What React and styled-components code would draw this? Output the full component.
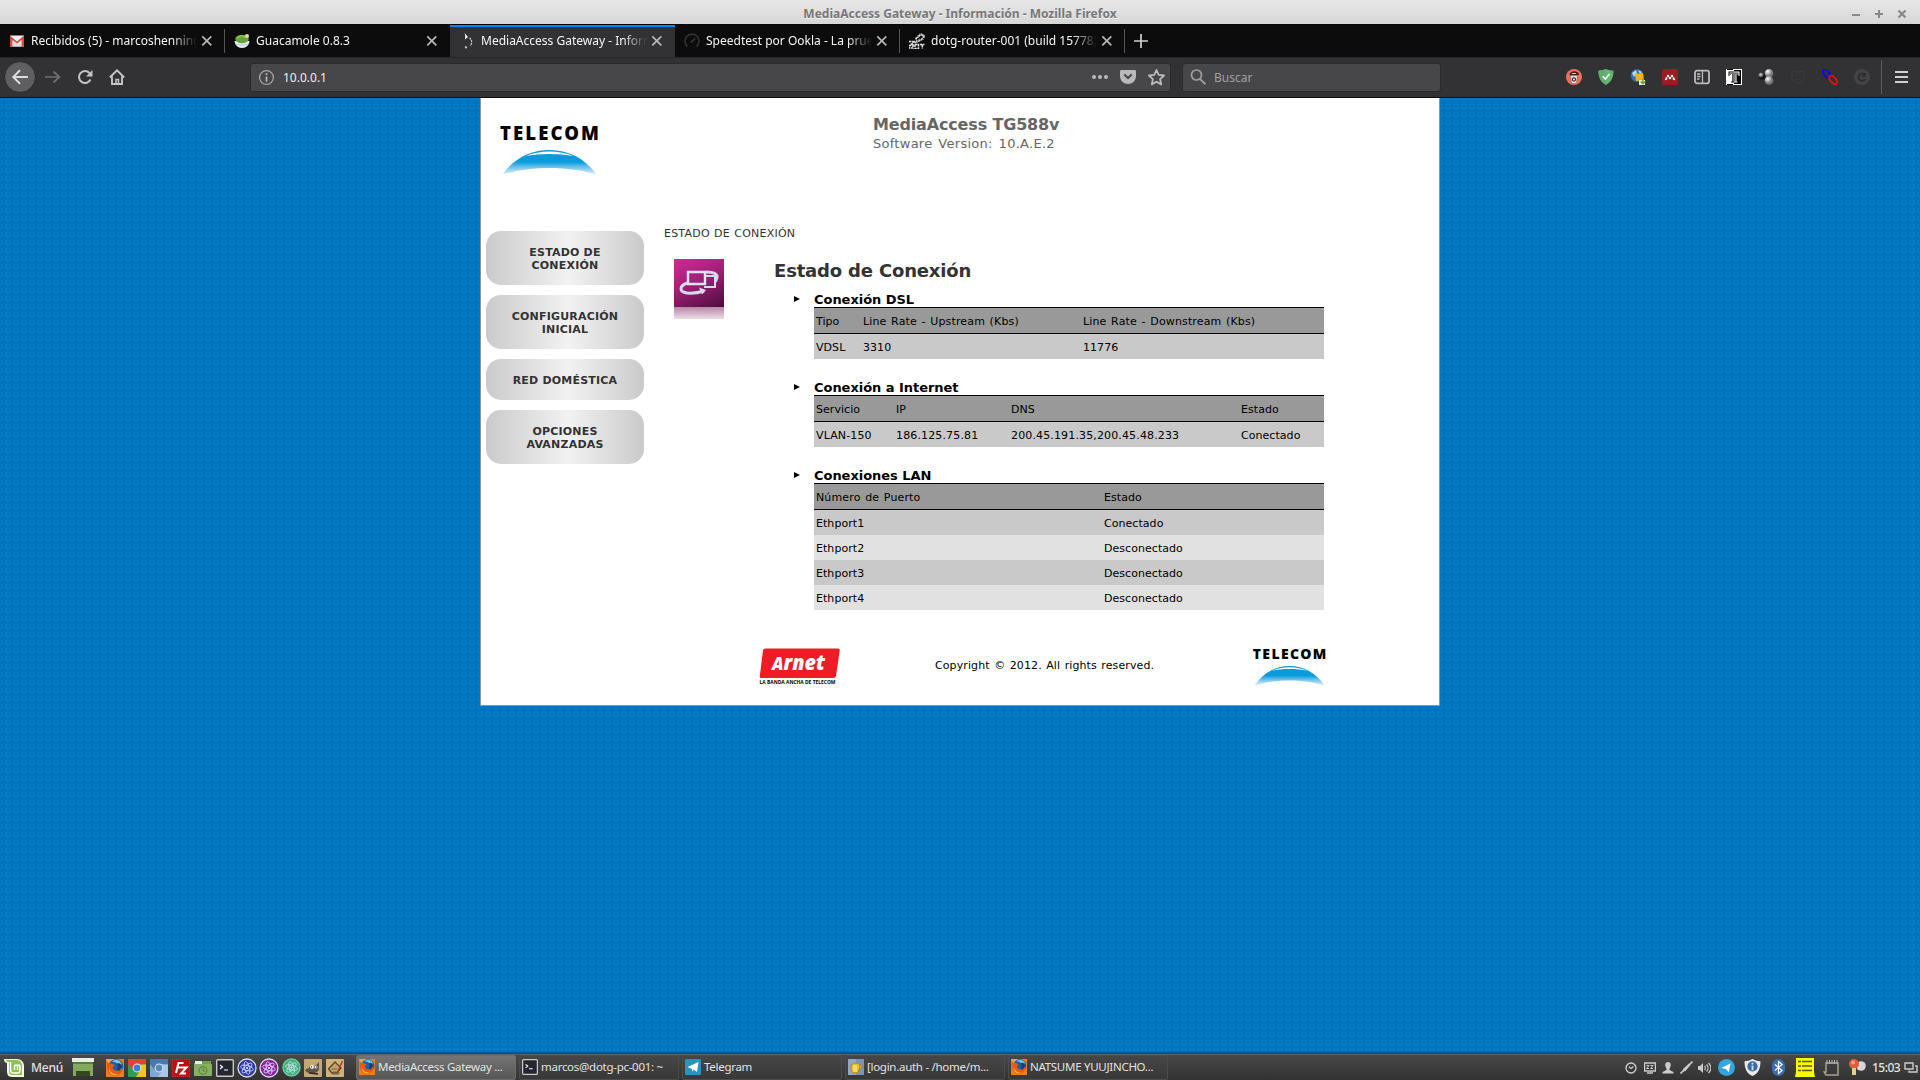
import React from "react";
import styled, { createGlobalStyle } from "styled-components";

const Global = createGlobalStyle`
  * { box-sizing: border-box; }
  body { margin: 0; background: #0073bd; overflow: hidden; }
  svg { display: block; flex: none; }
`;
const UI = `"Noto Sans", sans-serif`;
const WEB = `Verdana, "DejaVu Sans", sans-serif`;

const Screen = styled.div`
  width: 1920px; height: 1080px; display: flex; flex-direction: column;
  font-family: ${UI}; overflow: hidden;
`;
const TitleBar = styled.header`
  height: 24px; flex: none; display: grid; grid-template-columns: 1fr auto 1fr; align-items: center;
  background: linear-gradient(#e8e8e8, #d6d6d6); padding: 3px 11px 0 11px;
`;
const WindowTitle = styled.div`
  grid-column: 2; font-size: 12px; line-height: 20px; font-weight: 700; color: #777;
  text-shadow: 0 1px 0 #f4f4f4;
`;
const WindowButtons = styled.div`
  justify-self: end; display: flex; gap: 9px;
`;
const TabStrip = styled.div`
  height: 33px; flex: none; display: flex; background: #0c0c0d; border-top: 1px solid #050505;
`;
const Tab = styled.div`
  width: 225px; height: 32px; display: flex; align-items: center; padding: 0 10px 2px 9px; font-size: 12px;
  color: #f4f4f5; background: ${(p) => (p.$active ? "#323234" : "transparent")};
  border-top: 2px solid ${(p) => (p.$active ? "#0a84ff" : "transparent")};
  background-image: ${(p) => (p.$divider ? "linear-gradient(#555,#555)" : "none")};
  background-size: 1px 24px; background-position: right 2px; background-repeat: no-repeat;
`;
const TabLabel = styled.div`
  flex: 1; margin: 0 0 0 6px; white-space: nowrap; overflow: hidden; line-height: 20px;
  mask-image: linear-gradient(to right, #000 calc(100% - 26px), transparent calc(100% - 2px));
`;
const NewTab = styled.div`
  width: 32px; display: flex; align-items: center; justify-content: center; padding-bottom: 1px;
`;
const Toolbar = styled.div`
  height: 41px; flex: none; display: flex; align-items: center; background: #323234;
  border-top: 1px solid #27272a; border-bottom: 1px solid #0c0c0d; padding: 0 0 1px 4px;
`;
const BackButton = styled.div`
  width: 32px; height: 32px; border-radius: 50%; background: #5f5f61; border: 1px solid #29292b;
  display: flex; align-items: center; justify-content: center; margin-right: 1px;
`;
const NavIcon = styled.div`
  width: 32px; display: flex; justify-content: center;
`;
const Field = styled.div`
  width: ${(p) => p.$w}px; height: 29px; margin-left: ${(p) => p.$ml}px; background: #474749;
  border: 1px solid #2a2a2c; border-radius: 3px; display: flex; align-items: center;
  padding: 0 ${(p) => p.$pr || 0}px 0 7px; font-size: 12px; color: ${(p) => p.$color};
`;
const FieldText = styled.span`
  flex: 1; margin-left: 8px; line-height: 18px; padding-top: 1px;
`;
const FieldIcons = styled.div`
  display: flex; gap: 12px; align-items: center;
`;
const Extensions = styled.div`
  margin-left: auto; display: flex; align-items: center;
`;
const ExtCell = styled.div`
  width: 32px; display: flex; justify-content: center;
`;
const Divider = styled.div`
  width: 1px; height: 34px; margin: 0 13px 0 3px; background: #5c5c5e;
`;
const Viewport = styled.main`
  flex: 1; display: flex; justify-content: center; align-items: flex-start;
  background-color: #0073bd;
  background-image: radial-gradient(circle at 4px 4px, #0073bd 0 1.3px, #077dc5 1.9px 2.6px, #0073bd 3.4px);
  background-size: 8px 8px; background-position: -4px -3.5px;
  box-shadow: inset 0 -3px 2px -1px #00508c;
`;
const Sheet = styled.div`
  width: 960px; height: 608px; background: #fff; border: 1px solid #8f9499; border-top: 0;
  font-family: ${WEB}; display: flex; flex-direction: column;
`;
const Masthead = styled.div`
  height: 133px; flex: none; display: flex; padding-left: 19px;
`;
const Brand = styled.div`
  width: ${(p) => p.$w}px; display: flex; flex-direction: column; align-items: center;
  margin-top: ${(p) => p.$mt}px;
`;
const BrandName = styled.div`
  font-family: "Noto Sans", sans-serif; font-weight: 900; color: #000; white-space: nowrap;
  font-size: ${(p) => p.$size}px; line-height: ${(p) => p.$lh}px; letter-spacing: ${(p) => p.$ls}px;
  margin-right: -${(p) => p.$ls}px; margin-bottom: ${(p) => p.$mb}px;
`;
const Product = styled.div`
  margin-left: 274px; padding-top: 16px; color: #666; white-space: nowrap;
`;
const Model = styled.div`
  font-size: 16px; font-weight: 700; line-height: 22px; letter-spacing: -0.16px;
`;
const Version = styled.div`
  font-size: 13px; line-height: 15px; letter-spacing: 0.27px; word-spacing: 1.5px;
`;
const Body = styled.div`
  display: flex; flex: 1;
`;
const Menu = styled.nav`
  width: 158px; margin-left: 5px; display: flex; flex-direction: column; gap: 10px; align-self: flex-start;
`;
const MenuButton = styled.div`
  height: ${(p) => (p.$single ? 41 : 54)}px; border-radius: 15px; display: flex; align-items: center; padding-top: 2px;
  justify-content: center; text-align: center; white-space: pre-line; font-size: 11px; font-weight: 700; line-height: 13px;
  letter-spacing: 0.2px; color: #333; background: linear-gradient(to right, #cacaca, #f2f2f2 52%, #cacaca);
`;
const Content = styled.div`
  margin-left: 20px; flex: 1; display: grid; grid-template-columns: 110px 1fr;
  grid-template-rows: 20px 365px auto;
`;
const Crumb = styled.div`
  grid-column: 1 / 3; font-size: 11px; line-height: 14px; margin-top: -4px; color: #333;
  letter-spacing: 0.22px; word-spacing: 0.6px;
`;
const IconColumn = styled.div`
  padding: 8px 0 0 10px;
`;
const StatusBadge = styled.div`
  width: 50px; height: 48px; background: linear-gradient(155deg, #cf2b97, #a02078 45%, #4d0c3a);
`;
const BadgeShadow = styled.div`
  width: 50px; height: 12px; background: linear-gradient(#b986a5, #ecdde7);
`;
const Heading = styled.h1`
  margin: 6px 0 0; font-size: 18px; line-height: 28px; color: #333; letter-spacing: -0.17px;
`;
const Section = styled.section`
  height: 88px; padding-left: 20px; display: flex; align-items: flex-start;
`;
const Arrow = styled.div`
  width: 20px; padding-top: 10px;
`;
const SectionBody = styled.div`
  width: 510px; font-size: 11px; color: #000;
`;
const SectionTitle = styled.div`
  font-size: 13px; font-weight: 700; height: 22px; line-height: 30px; letter-spacing: -0.04px;
`;
const Grid = styled.div`
  display: grid; grid-template-columns: ${(p) => p.$cols};
  height: ${(p) => (p.$head ? 27 : 25)}px; line-height: 27px; padding-left: 2px; white-space: nowrap;
  background: ${(p) => (p.$head ? "#999" : p.$alt ? "#e1e1e1" : "#c9c9c9")};
  border: solid #000; border-width: ${(p) => (p.$head ? "1px 0" : "0")};
`;
const Cell = styled.span`
  height: 25px; letter-spacing: ${(p) => (p.$wide ? "0.14px" : "0.05px")}; word-spacing: 1px;
`;
const Footer = styled.footer`
  grid-column: 1 / 3; display: flex; margin-top: 32px; height: 60px;
`;
const Arnet = styled.div`
  width: 82px; margin-left: 95px; display: flex; flex-direction: column;
`;
const Copyright = styled.div`
  margin-left: 94px; width: 222px; font-size: 11px; line-height: 14px; padding-top: 11px; white-space: nowrap;
  letter-spacing: 0.1px; word-spacing: 0.9px; margin-right: 95px;
`;
const Panel = styled.footer`
  height: 26px; flex: none; display: flex; align-items: center; color: #e2e2e2; font-size: 12px;
  background: linear-gradient(#484848, #323232); border-top: 1px solid #5d6468; padding-left: 4px;
`;
const MenuLabel = styled.div`
  width: 41px; margin-left: 7px; font-size: 12px; line-height: 18px; padding-top: 1px; font-weight: 500;
  letter-spacing: -0.2px;
`;
const Launchers = styled.div`
  display: flex; align-items: center; margin: 0 10px;
`;
const Launcher = styled.div`
  width: 22px; display: flex; justify-content: center;
`;
const Tasks = styled.div`
  display: flex; gap: 3px;
`;
const Task = styled.div`
  width: 160px; height: 25px; display: flex; align-items: center; gap: 3px; padding: 0 2px 1px; white-space: nowrap;
  background: ${(p) => (p.$active ? "linear-gradient(#747474,#575757)" : "linear-gradient(#464646,#383838)")};
  border: 1px solid ${(p) => (p.$active ? "#6c6c6c" : "#4c4c4c")}; border-radius: 2px;
`;
const TaskLabel = styled.span`
  line-height: 18px; font-size: 11.5px; letter-spacing: -0.28px;
`;
const Tray = styled.div`
  margin-left: auto; display: flex; align-items: center; padding-right: 2px;
`;
const TrayCell = styled.div`
  width: ${(p) => p.$w}px; display: flex; justify-content: center;
`;
const Clock = styled.div`
  width: 32px; line-height: 18px; padding-top: 1px; font-size: 12px; font-weight: 500; letter-spacing: -0.5px;
`;

const Svg = ({ s = 16, w, h, vb, children }) => (
  <svg width={w || s} height={h || s} viewBox={vb || "0 0 16 16"} fill="none">{children}</svg>
);
const Cross = () => <Svg s={16}><path d="M3.300 3.300l9 9m0-9l-9 9" stroke="#b8b8ba" strokeWidth="1.700" /></Svg>;

const Gmail = () => (
  <Svg s={16}><path d="M1 2.500h14v11H1z" fill="#f2f2f2" /><path d="M1 13.500v-11l7 6 7-6v11h-2.600V7L8 10.800 3.600 7v6.500z" fill="#d54b3d" /><path d="M3.600 13.500V7.200L8 10.800l4.400-3.600v6.300z" fill="#ddd" /></Svg>
);
const Guac = () => (
  <Svg s={16}><path d="M.5 8h15c-.5 4-3 7-7.500 7S1 12 .5 8z" fill="#e8f0f4" /><path d="M1 10.500c3 2 11 2 14 0" stroke="#a9c6dc" /><ellipse cx="8" cy="6" rx="6.800" ry="4.200" fill="#65a33a" /><path d="M3 5l4-2 5 1" stroke="#8bc34a" strokeWidth="1.500" /><circle cx="13" cy="3" r="2" fill="#ead9a0" /></Svg>
);
const Loader = () => (
  <Svg s={16}><path d="M5.500 0l3.500 4-3.200 2.500c.8-2.500.6-4-.3-6.500z" fill="#fff" /><path d="M10.500 5c2.800 2.500 2.800 5 .8 8" stroke="#d8d8d8" strokeWidth="1.200" strokeDasharray="2 .8" /><path d="M6 13.500l2 .5-1 1.500z" fill="#fff" stroke="#ddd" strokeWidth=".5" /></Svg>
);
const Speed = () => (
  <Svg s={16}><path d="M3.500 13.500a7 7 0 1 1 9 0" stroke="#303034" strokeWidth="1.700" /><path d="M7 9.500l4-4" stroke="#3c3c40" strokeWidth="1.400" /></Svg>
);
const Ddwrt = () => (
  <Svg s={16}><path d="M0 8.500h4v2.500H1m4-3l2 2.500M0 12.500h4V15H0zm6-1h3.500v4H6zm5 0h4.500m-2.200 0v4M7 5.500l5-4 3 1.500-3 4-4 2z" stroke="#e8e8e8" strokeWidth="1.500" strokeDasharray="2.500 .6" /><circle cx="12" cy="4" r="3" stroke="#bbb" strokeWidth="1.400" strokeDasharray="1 1" /></Svg>
);

const Firefox = ({ s = 18 }) => (
  <Svg s={s} vb="0 0 18 18"><path d="M0 0h18v18H0z" fill="#e9801c" /><path d="M0 0h8L3 6z" fill="#f0a63a" /><circle cx="10" cy="7.500" r="7.300" fill="#1f5f9f" /><path d="M6 2.500c4-3 9-1 10 3-3-2-5 0-6-2z" fill="#7cc4ea" /><path d="M1 3c1 1 2 2 4 1.500C8 5 7.500 6 8.500 6.500 6.500 8 6 9 8 11c3 2 6 0 8-3 1 5-3 9-8 9-6-1-8-7-7-14z" fill="#e5591a" /><path d="M3 8c0 5 5 8 9 7-3 3-10 1-9-7z" fill="#f7b32b" /><path d="M11 5l2-1 3 4-3 4-2-1 1-3z" fill="#183f75" /></Svg>
);
const ChromeLogo = ({ mono }) => {
  const c = mono ? ["#4878ad", "#a9c8e6", "#7ca8d4"] : ["#dd4437", "#f4c61c", "#2f9e50"];
  return (
    <Svg s={18} vb="0 0 18 18"><rect width="18" height="18" rx="1" fill={c[2]} /><path d="M0 0h18v5.500H9L4.500 11 0 5z" fill={c[0]} /><path d="M18 5.500V18H8l5-8-2-4.500z" fill={c[1]} /><circle cx="9" cy="9" r="4.400" fill="#f0f0f0" /><circle cx="9" cy="9" r="3.400" fill={mono ? "#5287c4" : "#3f7fd0"} /></Svg>
  );
};
const Filezilla = () => (
  <Svg s={18} vb="0 0 18 18"><path d="M0 0h18v18H0z" fill="#bd0f12" stroke="#e04848" strokeDasharray="1 1" /><path d="M4 14L6.500 4h5M5 8.500h4.500M9 8.500h5.500L9 14.500h5" stroke="#fff" strokeWidth="2" /></Svg>
);
const Folder = () => (
  <Svg s={18} vb="0 0 18 18"><path d="M0 4h7l2-2h8v15H0z" fill="#72a34c" /><path d="M1 2h7v3H1z" fill="#e9eee4" /><rect y="5" width="18" height="12" rx="1" fill="#86b062" /><circle cx="9" cy="11.500" r="4" stroke="#587f3b" /><path d="M9 9v3h2" stroke="#587f3b" /></Svg>
);
const Terminal = ({ s = 18 }) => (
  <Svg s={s} vb="0 0 18 18"><rect x=".7" y=".7" width="16.600" height="16.600" rx="1" fill="#252530" stroke="#c8c8c8" strokeWidth="1.400" /><path d="M4 6l2.500 2L4 10M8 11h4" stroke="#fff" strokeWidth="1.200" /></Svg>
);
const Atom = ({ c, ring = "#dcdcea", s = 20 }) => (
  <Svg s={s} vb="0 0 20 20"><circle cx="10" cy="10" r="9" fill={c} stroke={ring} strokeWidth="1.300" /><g stroke="#d8e4ff" strokeWidth=".8"><ellipse cx="10" cy="10" rx="6.500" ry="2.500" transform="rotate(15 10 10)" /><ellipse cx="10" cy="10" rx="6.500" ry="2.500" transform="rotate(75 10 10)" /><ellipse cx="10" cy="10" rx="6.500" ry="2.500" transform="rotate(135 10 10)" /></g><circle cx="10" cy="10" r="1" fill="#fff" /></Svg>
);
const Gimp = () => (
  <Svg s={18} vb="0 0 18 18"><rect width="18" height="18" rx="1" fill="#c6a673" /><path d="M1 11c2-2 4-1 5-4l2 1 4-2 3-3v7c-1 4-5 5-9 4-3 0-4-1-5-3z" fill="#5e5548" /><circle cx="8" cy="8" r="2" fill="#eee" /><circle cx="12" cy="8" r="1.500" fill="#eee" /><path d="M7 8h1M12 8h1" stroke="#111" /><path d="M5 14l9 1" stroke="#2c2823" strokeWidth="1.500" /></Svg>
);
const Craft = () => (
  <Svg s={18} vb="0 0 18 18"><rect width="18" height="18" rx="1" fill="#d3b27a" /><path d="M2.500 10L9 3l6 6-4 5H6z" fill="#c4a46c" stroke="#574730" strokeWidth="1.300" /><path d="M6 10h5M7 13h6v2H6z" stroke="#74603f" /><path d="M16.500 2L12 12" stroke="#b33a28" strokeWidth="1.500" /></Svg>
);
const Mint = () => (
  <Svg s={20} vb="0 0 20 20"><path d="M0 1h13c4 0 7 3 7 7v11H8c-4 0-5-3-5-6V5C2 5 0 4 0 1z" fill="#f3f6ee" /><path d="M2 2h10c4 0 6 2 6 6v9H9c-4 0-4-2-4-5V4C3 4 2 3 2 2z" fill="#8cc24f" /><path d="M6.500 4v8c0 2 1 3 3 3h4c2 0 2.500-1 2.500-3V8.500c0-2-2.500-2-2.500 0V12m0-3.500c0-2-3-2-3 0V12" stroke="#fff" strokeWidth="1.500" /></Svg>
);
const Desktop = () => (
  <Svg w={22} h={19} vb="0 0 22 19"><path d="M0 0h22v4H0z" fill="#e9ece6" /><path d="M1 4h20v14H1z" fill="#83a95b" /><path d="M1 4h20v2H1z" fill="#5b7b3c" /><path d="M4 13h14v5H4z" fill="#38451f" /></Svg>
);
const TgSquare = () => (
  <Svg s={16}><rect width="16" height="16" rx="1" fill="#2795bf" /><path d="M2.500 8l11-5-1.500 10-3.500-2.500L7 13v-3z" fill="#fff" /></Svg>
);
const Login = () => (
  <Svg s={16}><rect width="16" height="16" fill="#7c93bd" /><path d="M0 0h8v16H0z" fill="#92a6ca" /><path d="M3 6c2 0 1-2 5-2s5 3 3 7l-1 3H5L3 11zM11 6c4-1 4 4 0 4" fill="#e6c12b" stroke="#a78515" /><path d="M6 6v7m2-7v7" stroke="#fff4a0" /></Svg>
);

const Arc = ({ w, h, id }) => (
  <svg width={w} height={h} viewBox="0 0 92 25" preserveAspectRatio="none" fill="none">
    <defs><linearGradient id={id} x1="0" y1="0" x2="0" y2="25" gradientUnits="userSpaceOnUse">
      <stop offset="0" stopColor="#0a97d6" /><stop offset=".48" stopColor="#0a9cdd" /><stop offset=".68" stopColor="#6cc0ea" /><stop offset=".88" stopColor="#b9e0f5" /><stop offset="1" stopColor="#fff" />
    </linearGradient></defs>
    <path d="M0 25C12 8 28 0 46 0s34 8 46 25C78 20 62 18 46 18S14 20 0 25z" fill={`url(#${id})`} />
    <path d="M23 6c13-6 33-6 46 0-13-2.800-33-2.800-46 0z" fill="#fff" />
  </svg>
);

const tabs = [
  { label: "Recibidos (5) - marcoshenning", icon: <Gmail />, divider: true },
  { label: "Guacamole 0.8.3", icon: <Guac /> },
  { label: "MediaAccess Gateway - Información", icon: <Loader />, active: true },
  { label: "Speedtest por Ookla - La prueba", icon: <Speed />, divider: true },
  { label: "dotg-router-001 (build 15778)", icon: <Ddwrt />, divider: true },
];

const menu = ["ESTADO DE\nCONEXIÓN", "CONFIGURACIÓN\nINICIAL", "RED DOMÉSTICA", "OPCIONES\nAVANZADAS"];

const sections = [
  { title: "Conexión DSL", cols: "47px 220px 1fr", head: ["Tipo", "Line Rate - Upstream (Kbs)", "Line Rate - Downstream (Kbs)"], rows: [["VDSL", "3310", "11776"]] },
  { title: "Conexión a Internet", cols: "80px 115px 230px 1fr", head: ["Servicio", "IP", "DNS", "Estado"], rows: [["VLAN-150", "186.125.75.81", "200.45.191.35,200.45.48.233", "Conectado"]] },
  { title: "Conexiones LAN", cols: "288px 1fr", head: ["Número de Puerto", "Estado"], rows: [["Ethport1", "Conectado"], ["Ethport2", "Desconectado"], ["Ethport3", "Desconectado"], ["Ethport4", "Desconectado"]] },
];

const launchers = [
  <Firefox />, <ChromeLogo />, <ChromeLogo mono />, <Filezilla />, <Folder />, <Terminal />,
  <Atom c="#3038a8" />, <Atom c="#8c1fa0" />, <Atom c="#3bb27a" ring="#7ccda5" s={19} />, <Gimp />, <Craft />,
];

const tasks = [
  { label: "MediaAccess Gateway ...", icon: <Firefox s={16} />, active: true },
  { label: "marcos@dotg-pc-001: ~", icon: <Terminal s={16} /> },
  { label: "Telegram", icon: <TgSquare /> },
  { label: "[login.auth - /home/m...", icon: <Login /> },
  { label: "NATSUME YUUJINCHO...", icon: <Firefox s={16} /> },
];

const extensions = [
  <Svg><circle cx="8" cy="8" r="8" fill="#f26d5b" /><path d="M3.500 6c0-4.500 9-5.500 9.500-.5l-1 1H4z" fill="#3a2a2a" /><path d="M6 4.500h4" stroke="#f3b0a4" /><path d="M4.500 6.500h7l-1 8h-5z" fill="#f3dede" stroke="#666" strokeWidth=".6" /><circle cx="8" cy="10.500" r="1.600" stroke="#333" strokeWidth="1.100" /></Svg>,
  <Svg><path d="M8 0c3 1.300 5 1.500 7.500 1.700C15.500 9 13 13 8 16 3 13 .5 9 .5 1.700 3 1.500 5 1.300 8 0z" fill="#68b573" /><path d="M8 0v16C3 13 .5 9 .5 1.700 3 1.500 5 1.300 8 0z" fill="#5fae6c" /><path d="M4.800 7.200l2.500 2.800L11.500 5" stroke="#fff" strokeWidth="1.600" /></Svg>,
  <Svg><circle cx="7" cy="6.500" r="6.300" fill="#2f73b8" /><path d="M2 4l4-3 1 3-3 4zM8 1l4 2-2 2z" fill="#b7d8ee" /><path d="M5 5l8-1 1 7-8 1z" fill="#f9b118" /><path d="M9 11h6v5H9z" fill="#e9efe0" /><path d="M13 9.500v5m-2.300-2l2.300 2.300 2.300-2.300" stroke="#5fa52c" strokeWidth="1.400" /></Svg>,
  <Svg><rect width="16" height="16" rx="1.500" fill="#9e1b22" /><path d="M4.500 10.500V8.300m7 2.200V8.300" stroke="#fff" strokeWidth="1.500" /><circle cx="6" cy="7" r="1.200" fill="#fff" /><circle cx="10" cy="7" r="1.200" fill="#fff" /><circle cx="8" cy="9" r="1.300" fill="#fff" /><circle cx="3.700" cy="10.300" r=".9" fill="#fff" /><circle cx="12.300" cy="10.300" r=".9" fill="#fff" /></Svg>,
  <Svg><rect x="1" y="1.700" width="14" height="12.600" rx="2" stroke="#bbb" strokeWidth="1.800" /><path d="M8.500 2v12M3 5h3.500M3 7.500h3.500M3 10h2.500" stroke="#bbb" strokeWidth="1.300" /></Svg>,
  <Svg><path d="M0 0h16v16H0z" fill="#fff" /><path d="M8 1h7v14H8zM1 0h6v1H1zM1 15h6v1H1z" fill="#000" /><path d="M2.500 2.500H8v1H3.500V7h-1zM8 12v1.500H5v-1h1.300V5h1.200v7z" fill="#000" /><path d="M3.500 3.500h9V6H11V5H9.500v7.500h-3V5H5v1H3.500z" fill="#777" /><path d="M8 2.500h5.500V7h-1V3.500H8zM9.500 5h1v7.500h1v1H8v-1h1.500z" fill="#fff" /></Svg>,
  <Svg><defs><radialGradient id="ball" cx=".35" cy=".3"><stop offset="0" stopColor="#fff" /><stop offset="1" stopColor="#777" /></radialGradient><radialGradient id="dark" cx=".35" cy=".3"><stop offset="0" stopColor="#ddd" /><stop offset="1" stopColor="#111" /></radialGradient></defs><circle cx="11" cy="4.300" r="4.300" fill="url(#ball)" /><circle cx="11" cy="11.500" r="4.300" fill="url(#ball)" /><circle cx="3.700" cy="7" r="3.500" fill="url(#dark)" /></Svg>,
  <Svg><path d="M2 2l6 1 6-1v6c0 3-3 5-6 6-3-1-6-3-6-6zM5 6h2m2 0h2M6 10c1 1 3 1 4 0" stroke="#3c3c3f" /></Svg>,
  <Svg><ellipse cx="4.600" cy="4.800" rx="5" ry="2.700" transform="rotate(50 4.600 4.800)" stroke="#1600f5" strokeWidth="1.800" /><ellipse cx="11.200" cy="11" rx="5" ry="2.700" transform="rotate(50 11.200 11)" stroke="#f50a0a" strokeWidth="1.800" /></Svg>,
  <Svg><circle cx="8" cy="8" r="8" fill="#434346" /><path d="M11 6a3.600 3.600 0 1 0 .2 4M11 4v3H8" stroke="#2c2c2e" strokeWidth="1.700" /></Svg>,
];

const tray = [
  [18, <Svg s={12} vb="0 0 12 12"><circle cx="6" cy="6" r="5" stroke="#d0d0d0" strokeWidth="1.300" /><path d="M3.800 4.800L6 6.500l2.500-2" stroke="#d0d0d0" strokeWidth="1.100" /></Svg>],
  [19, <Svg s={12} vb="0 0 12 12"><path d="M.6 1h10.800v8H.6zM3 11h6" stroke="#ccc" strokeWidth="1.300" /><path d="M2.500 3.500h2.500l-2.500 3H5M6.500 3.500H9l-2.500 3H9" stroke="#ccc" /></Svg>],
  [18, <Svg s={12} vb="0 0 12 12"><path d="M6 0c3 0 3 3 2.500 4.500L7.500 7v1l4 2v1.500H.5V10l4-2V7l-1-2.500C3 3 3 0 6 0z" fill="#ccc" /></Svg>],
  [18, <Svg s={13} vb="0 0 13 13"><path d="M12.500.5L9 4m-5 5L.5 12.500" stroke="#ccc" strokeWidth="1.600" /><path d="M9 2.500L10.500 4 5.500 10 3 10.500 3 8z" fill="#ccc" /></Svg>],
  [18, <Svg w={13} h={12} vb="0 0 13 12"><path d="M0 4h2l3-3v10L2 8H0z" fill="#ccc" /><path d="M6.500 4c1 1 1 3 0 4M8.500 2.500c2 2 2 5 0 7M10.500 1c3 3 3 7 0 10" stroke="#ccc" strokeWidth="1.200" /></Svg>],
  [26, <Svg s={17}><circle cx="8" cy="8" r="8" fill="#33a5dc" /><path d="M3 8.500L12 4l-2 8.500-2.500-3z" fill="#fff" /></Svg>],
  [27, <Svg s={17}><path d="M8 0c3 1.500 5 2 7.500 2 0 7-2 11.500-7.500 14C2.500 13.500.5 9 .5 2 3 2 5 1.500 8 0z" fill="#e9e9e9" /><circle cx="8" cy="7" r="4.800" fill="#3a6aa8" /><path d="M8 3.500v1.700M8 6v4.500" stroke="#cfe4fa" strokeWidth="1.700" /></Svg>],
  [24, <Svg w={13} h={17} vb="0 0 13 17"><rect width="13" height="17" rx="6.500" fill="#3d6fb0" /><path d="M3 5.500l7 6-3.500 3v-12l3.500 3-7 6" stroke="#fff" strokeWidth="1.200" /></Svg>],
  [29, <Svg w={20} h={19} vb="0 0 20 19"><path d="M1 0h18v14l1 5H0l1-5z" fill="#f9f900" /><path d="M3 3.500h3m1 0h10M3 8h3m1 0h10M3 12.500h3m1 0h10" stroke="#5a5a0d" strokeWidth="1.500" /></Svg>],
  [23, <Svg w={16} h={16}><path d="M3 3h12v12H3l-2-3h2z" stroke="#aaa08d" strokeWidth="1.500" /><path d="M4 0v4m2.500-4v4M9 0v4m2.500-4v4M14 0v4" stroke="#bbb" strokeWidth="1" /></Svg>],
  [30, <Svg w={18} h={17} vb="0 0 18 17"><circle cx="13" cy="7" r="4.800" fill="#d7d7d7" /><circle cx="6" cy="5" r="5" fill="#e25a3a" /><circle cx="5" cy="3.500" r="2" fill="#f3a28a" /><path d="M4 9h4v7H4z" fill="#e0d08d" /></Svg>],
];

export default function App() {
  return (
    <>
      <Global />
      <Screen>
        <TitleBar>
          <WindowTitle>MediaAccess Gateway - Información - Mozilla Firefox</WindowTitle>
          <WindowButtons>
            <Svg s={14} vb="0 0 14 14"><path d="M3 8h8" stroke="#888" strokeWidth="2" /></Svg>
            <Svg s={14} vb="0 0 14 14"><path d="M3 7h8M7 3v8" stroke="#888" strokeWidth="2" /></Svg>
            <Svg s={14} vb="0 0 14 14"><path d="M3.500 3.500l7 7m0-7l-7 7" stroke="#888" strokeWidth="2.200" /></Svg>
          </WindowButtons>
        </TitleBar>
        <TabStrip>
          {tabs.map((t) => (
            <Tab key={t.label} $active={t.active} $divider={t.divider}>
              {t.icon}<TabLabel>{t.label}</TabLabel><Cross />
            </Tab>
          ))}
          <NewTab><Svg><path d="M8 1v14M1 8h14" stroke="#d0d0d2" strokeWidth="1.700" /></Svg></NewTab>
        </TabStrip>
        <Toolbar>
          <BackButton><Svg s={18}><path d="M15 8H2m6-6L2 8l6 6" stroke="#ddd" strokeWidth="1.700" /></Svg></BackButton>
          <NavIcon><Svg><path d="M0 8h14M8.500 2.500L14.500 8l-6 5.500" stroke="#707072" strokeWidth="1.700" /></Svg></NavIcon>
          <NavIcon><Svg><path d="M13.500 10.500A6 6 0 1 1 12.500 4" stroke="#c4c4c6" strokeWidth="2" /><path d="M15.500 1v6.500H9z" fill="#c4c4c6" /></Svg></NavIcon>
          <NavIcon><Svg><path d="M.8 8.500L8 1.300l7.200 7.200M3 7.500V15h10V7.500" stroke="#c4c4c6" strokeWidth="1.900" /><path d="M7 15v-4.500h2.500V15" stroke="#c4c4c6" strokeWidth="1.500" /></Svg></NavIcon>
          <Field $w={921} $ml={117} $pr={5} $color="#eee">
            <Svg s={17}><circle cx="8" cy="8" r="6.500" stroke="#a8a8aa" strokeWidth="1.200" /><path d="M8 4v1.700M8 7v5" stroke="#b8b8ba" strokeWidth="1.600" /></Svg>
            <FieldText>10.0.0.1</FieldText>
            <FieldIcons>
              <Svg s={16}><circle cx="2" cy="8" r="2" fill="#bbb" /><circle cx="8" cy="8" r="2" fill="#bbb" /><circle cx="14" cy="8" r="2" fill="#bbb" /></Svg>
              <Svg s={16}><path d="M1.500 1h13c1 0 1.500.5 1.500 1.500V7c0 5-4 8-8 8S0 12 0 7V2.500C0 1.500.5 1 1.500 1z" fill="#b8b8ba" /><path d="M4.300 5.500L8 9l3.700-3.500" stroke="#474749" strokeWidth="2" /></Svg>
              <Svg s={17}><path d="M8 1l2.100 4.600 5 .5-3.700 3.400 1 5L8 12l-4.400 2.500 1-5L.9 6.100l5-.5z" stroke="#bbb" strokeWidth="1.700" strokeLinejoin="round" /></Svg>
            </FieldIcons>
          </Field>
          <Field $w={259} $ml={11} $color="#a0a0a2">
            <Svg s={16}><circle cx="6.500" cy="6" r="5" stroke="#a0a0a2" strokeWidth="1.700" /><path d="M10 9.800l5.500 5.500" stroke="#a0a0a2" strokeWidth="1.900" /></Svg>
            <FieldText>Buscar</FieldText>
          </Field>
          <Extensions>
            {extensions.map((e, i) => <ExtCell key={i}>{e}</ExtCell>)}
            <Divider />
            <Svg w={25} h={14} vb="0 0 25 14"><path d="M0 2h13M0 7h13M0 12h13" stroke="#d0d0d2" strokeWidth="2" /></Svg>
          </Extensions>
        </Toolbar>
        <Viewport>
          <Sheet>
            <Masthead>
              <Brand $w={99} $mt={25}>
                <BrandName $size={18.5} $lh={19} $ls={2.1} $mb={8}>TELECOM</BrandName>
                <Arc w={95} h={25} id="arcTop" />
              </Brand>
              <Product>
                <Model>MediaAccess TG588v</Model>
                <Version>Software Version: 10.A.E.2</Version>
              </Product>
            </Masthead>
            <Body>
              <Menu>
                {menu.map((m) => <MenuButton key={m} $single={!m.includes("\n")}>{m}</MenuButton>)}
              </Menu>
              <Content>
                <Crumb>ESTADO DE CONEXIÓN</Crumb>
                <IconColumn>
                  <StatusBadge>
                    <Svg w={50} h={48} vb="0 0 50 48"><path d="M14 13h17v12H14z" stroke="#e3e3f0" strokeWidth="2.400" /><path d="M32 17h9v11h-9M30 28h11" stroke="#d9d9ec" strokeWidth="2" /><path d="M32 13c8 0 12 2 11 6-.5 2-1 3-2 4" stroke="#d9d9ec" strokeWidth="2.800" /><path d="M13 24c-8 3-8 9 0 10 6 .5 12-.5 17-2" stroke="#d5daee" strokeWidth="3" /><path d="M25 28.500l7 2.500-4 4.500z" fill="#d5daee" /></Svg>
                  </StatusBadge>
                  <BadgeShadow />
                </IconColumn>
                <div>
                  <Heading>Estado de Conexión</Heading>
                  {sections.map((s) => (
                    <Section key={s.title}>
                      <Arrow><Svg w={6} h={8} vb="0 0 6 8"><path d="M0 1l6 3-6 3z" fill="#000" /></Svg></Arrow>
                      <SectionBody>
                        <SectionTitle>{s.title}</SectionTitle>
                        <Grid $head $cols={s.cols}>{s.head.map((c) => <Cell key={c} $wide={c.includes(" ")}>{c}</Cell>)}</Grid>
                        {s.rows.map((r, i) => (
                          <Grid key={r[0]} $alt={i % 2 === 1} $cols={s.cols}>
                            {r.map((c) => <Cell key={c} $wide={/[.-]/.test(c)}>{c}</Cell>)}
                          </Grid>
                        ))}
                      </SectionBody>
                    </Section>
                  ))}
                </div>
                <Footer>
                  <Arnet>
                    <svg width="82" height="38" viewBox="0 0 82 38">
                      <path d="M6 0.500h73q2 0 1.700 2L77 28q-.5 2-2.500 2H2.500Q.5 30 .8 28L4 2.500q.4-2 2-2z" fill="#ee1c25" />
                      <text x="13" y="21.500" textLength="53" lengthAdjust="spacingAndGlyphs" fontFamily="Open Sans, sans-serif" fontWeight="800" fontStyle="italic" fontSize="21" fill="#fff"><tspan fontSize="18">A</tspan>rnet</text>
                      <text x="0.500" y="36" textLength="76" lengthAdjust="spacingAndGlyphs" fontFamily="Open Sans, sans-serif" fontWeight="700" fontSize="5.500" fill="#000">LA BANDA ANCHA DE TELECOM</text>
                    </svg>
                  </Arnet>
                  <Copyright>Copyright © 2012. All rights reserved.</Copyright>
                  <Brand $w={75} $mt={-2}>
                    <BrandName $size={14} $lh={16} $ls={1.4} $mb={4}>TELECOM</BrandName>
                    <Arc w={71} h={20} id="arcBottom" />
                  </Brand>
                </Footer>
              </Content>
            </Body>
          </Sheet>
        </Viewport>
        <Panel>
          <Mint />
          <MenuLabel>Menú</MenuLabel>
          <Desktop />
          <Launchers>
            {launchers.map((l, i) => <Launcher key={i}>{l}</Launcher>)}
          </Launchers>
          <Tasks>
            {tasks.map((t) => (
              <Task key={t.label} $active={t.active}>{t.icon}<TaskLabel>{t.label}</TaskLabel></Task>
            ))}
          </Tasks>
          <Tray>
            {tray.map(([w, icon], i) => <TrayCell key={i} $w={w}>{icon}</TrayCell>)}
            <Clock>15:03</Clock>
            <Svg w={14} h={12} vb="0 0 14 12"><path d="M1 1h8v6H1z" stroke="#ccc" strokeWidth="1.400" /><path d="M11 4h2v6H5V8.500" stroke="#ccc" strokeWidth="1.400" /></Svg>
          </Tray>
        </Panel>
      </Screen>
    </>
  );
}
